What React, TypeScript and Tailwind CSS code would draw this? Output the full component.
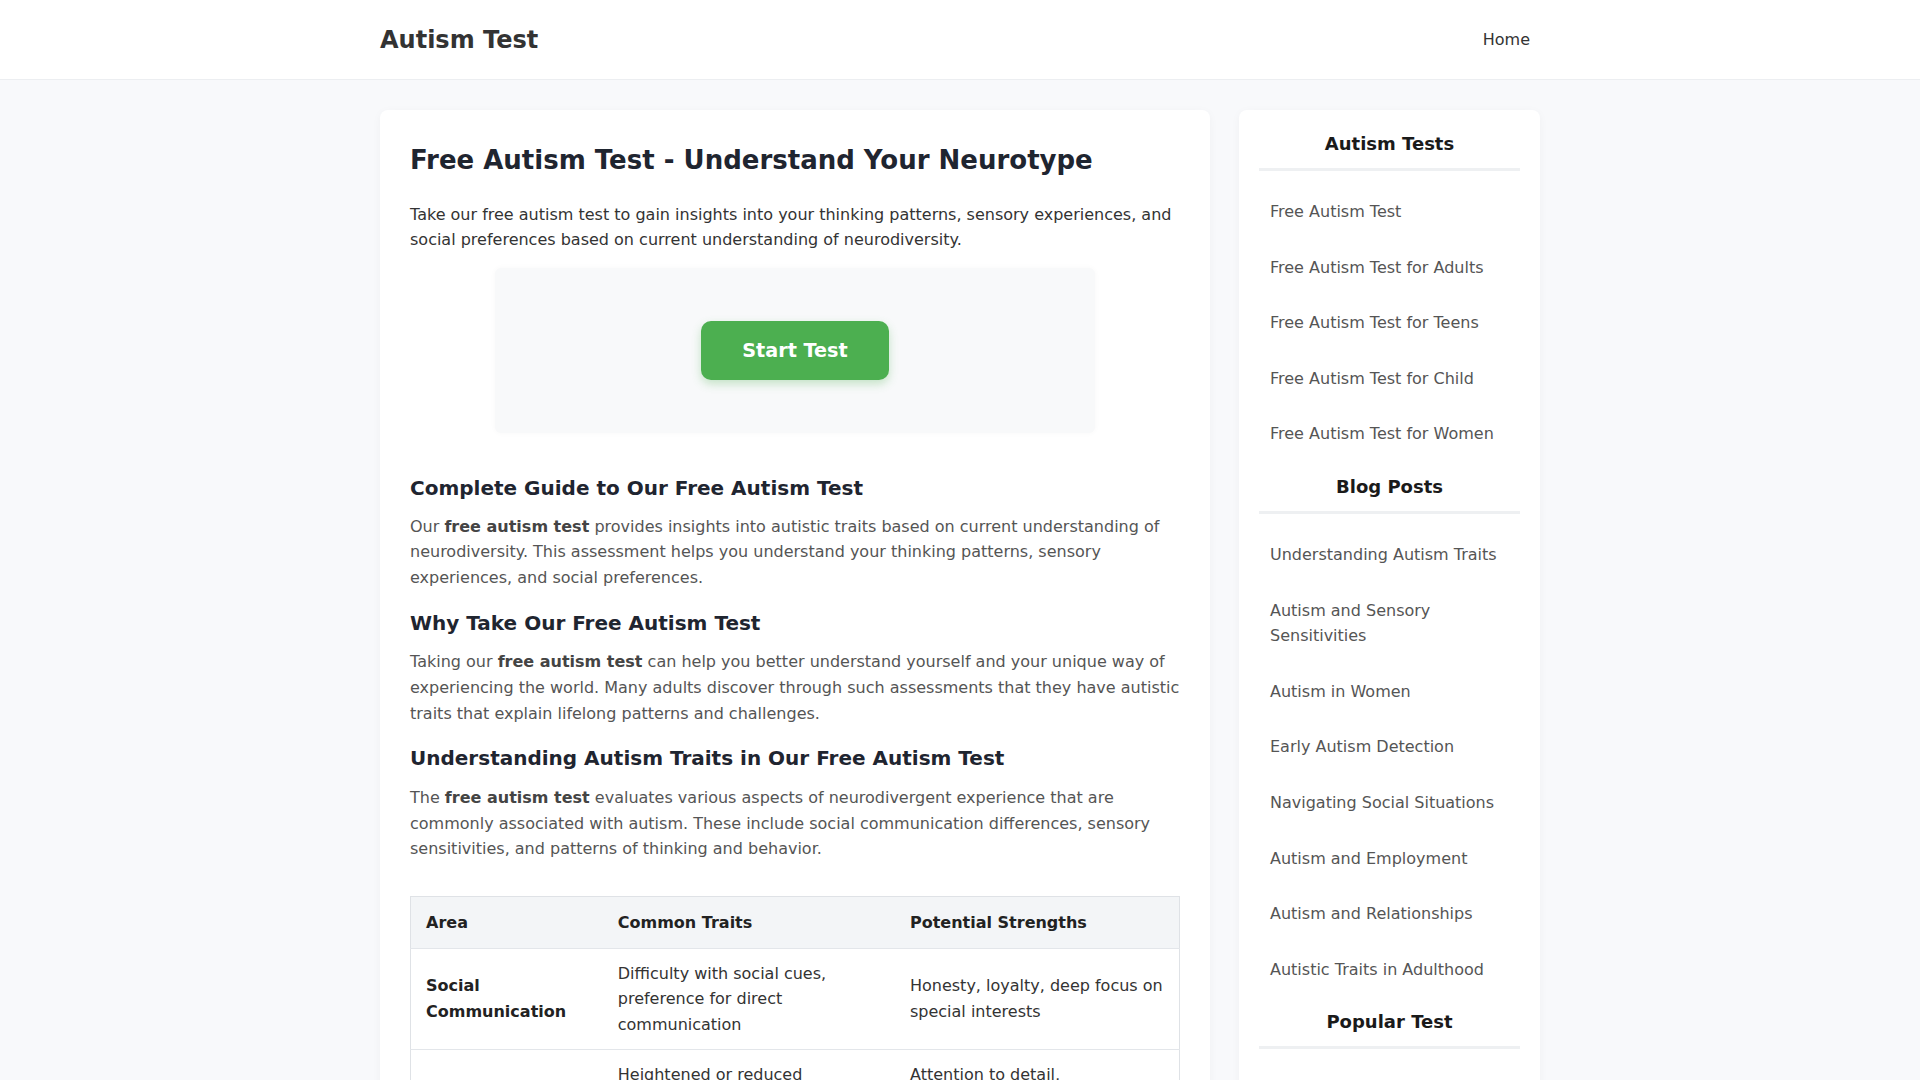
const testLinks = [
  "Free Autism Test",
  "Free Autism Test for Adults",
  "Free Autism Test for Teens",
  "Free Autism Test for Child",
  "Free Autism Test for Women",
];

const blogLinks = [
  "Understanding Autism Traits",
  "Autism and Sensory Sensitivities",
  "Autism in Women",
  "Early Autism Detection",
  "Navigating Social Situations",
  "Autism and Employment",
  "Autism and Relationships",
  "Autistic Traits in Adulthood",
];

const popularLinks = ["ADHD Test", "Personality Test", "Anxiety Test"];

const rows = [
  {
    area: "Social Communication",
    traits: "Difficulty with social cues, preference for direct communication",
    strengths: "Honesty, loyalty, deep focus on special interests",
  },
  {
    area: "Sensory Processing",
    traits: "Heightened or reduced sensitivity to sounds, lights, textures",
    strengths: "Attention to detail, extraordinary sensory perception",
  },
  {
    area: "Thinking Patterns",
    traits: "Preference for routine, intense focus on specific topics",
    strengths: "Pattern recognition, systematic thinking",
  },
];

function SideSection({ title, links }: { title: string; links: string[] }) {
  return (
    <div className="mt-[11px] first:mt-0">
      <h3 className="text-center text-[18px] leading-[26px] font-bold text-[#1a1a1a] pt-px pb-[11px] border-b-[3px] border-[#eef0f2]">
        {title}
      </h3>
      <ul className="mt-[13px]">
        {links.map((l) => (
          <li key={l}>
            <a
              href="#"
              className="block px-[11px] py-[15px] text-[16px] leading-[25.6px] text-[#555]"
            >
              {l}
            </a>
          </li>
        ))}
      </ul>
    </div>
  );
}

export default function App() {
  return (
    <div
      className="min-h-screen bg-[#f8f9fb] text-[#333]"
      style={{ fontFamily: "'DejaVu Sans', sans-serif" }}
    >
      <header className="bg-white border-b border-[#eceef1] h-[80px]">
        <div className="max-w-[1200px] mx-auto px-5 h-full flex items-center justify-between">
          <a href="#" className="text-[24px] font-bold text-[#333]">
            Autism Test
          </a>
          <nav>
            <a href="#" className="px-[10px] text-[16px] text-[#333]">
              Home
            </a>
          </nav>
        </div>
      </header>

      <div className="max-w-[1200px] mx-auto px-5 pt-[30px] grid grid-cols-[1fr_301px] gap-[29px] items-start">
        <main className="bg-white rounded-lg shadow-[0_2px_10px_rgba(0,0,0,0.04)] p-[30px] pt-[33px]">
          <h1 className="text-[26px] leading-[34px] font-bold text-[#1f2530]">
            Free Autism Test - Understand Your Neurotype
          </h1>
          <p className="mt-[25px] text-[16px] leading-[25.3px] text-[#333]">
            Take our free autism test to gain insights into your thinking patterns, sensory
            experiences, and social preferences based on current understanding of
            neurodiversity.
          </p>

          <div className="mt-[15px] max-w-[600px] mx-auto bg-[#f8f9fa] rounded-md shadow-[0_0_6px_rgba(0,0,0,0.03)] py-[53px] flex justify-center">
            <button className="bg-[#4caf50] text-white font-bold text-[19.2px] leading-[27px] px-[41px] py-[16px] rounded-[10px] shadow-[0_4px_10px_rgba(76,175,80,0.3)]">
              Start Test
            </button>
          </div>

          <h2 className="mt-[42px] text-[20px] leading-[26px] font-bold text-[#1f2530]">
            Complete Guide to Our Free Autism Test
          </h2>
          <p className="mt-[13px] text-[16px] leading-[25.6px] text-[#555]">
            Our <strong className="text-[#444]">free autism test</strong> provides insights into
            autistic traits based on current understanding of neurodiversity. This assessment
            helps you understand your thinking patterns, sensory experiences, and social
            preferences.
          </p>

          <h2 className="mt-[20px] text-[20px] leading-[26px] font-bold text-[#1f2530]">
            Why Take Our Free Autism Test
          </h2>
          <p className="mt-[13px] text-[16px] leading-[25.6px] text-[#555]">
            Taking our <strong className="text-[#444]">free autism test</strong> can help you
            better understand yourself and your unique way of experiencing the world. Many adults
            discover through such assessments that they have autistic traits that explain
            lifelong patterns and challenges.
          </p>

          <h2 className="mt-[19px] text-[20px] leading-[26px] font-bold text-[#1f2530]">
            Understanding Autism Traits in Our Free Autism Test
          </h2>
          <p className="mt-[14px] text-[16px] leading-[25.6px] text-[#555]">
            The <strong className="text-[#444]">free autism test</strong> evaluates various
            aspects of neurodivergent experience that are commonly associated with autism. These
            include social communication differences, sensory sensitivities, and patterns of
            thinking and behavior.
          </p>

          <table className="mt-[34px] w-full border-collapse border border-[#dfe2e6] text-[16px] leading-[25.6px]">
            <thead>
              <tr className="bg-[#f3f5f7] border-b border-[#e3e6ea]">
                <th className="w-[25%] px-[15px] pt-[13px] pb-3 text-left font-bold text-[#222]">
                  Area
                </th>
                <th className="w-[38%] px-[15px] pt-[13px] pb-3 text-left font-bold text-[#222]">
                  Common Traits
                </th>
                <th className="px-[15px] pt-[13px] pb-3 text-left font-bold text-[#222]">
                  Potential Strengths
                </th>
              </tr>
            </thead>
            <tbody>
              {rows.map((r) => (
                <tr key={r.area} className="border-b border-[#e3e6ea]">
                  <td className="px-[15px] py-3 font-bold text-[#222]">{r.area}</td>
                  <td className="px-[15px] py-3 text-[#333]">{r.traits}</td>
                  <td className="px-[15px] py-3 text-[#333]">{r.strengths}</td>
                </tr>
              ))}
            </tbody>
          </table>
        </main>

        <aside className="bg-white rounded-lg shadow-[0_2px_10px_rgba(0,0,0,0.04)] p-5">
          <SideSection title="Autism Tests" links={testLinks} />
          <SideSection title="Blog Posts" links={blogLinks} />
          <SideSection title="Popular Test" links={popularLinks} />
        </aside>
      </div>
    </div>
  );
}
